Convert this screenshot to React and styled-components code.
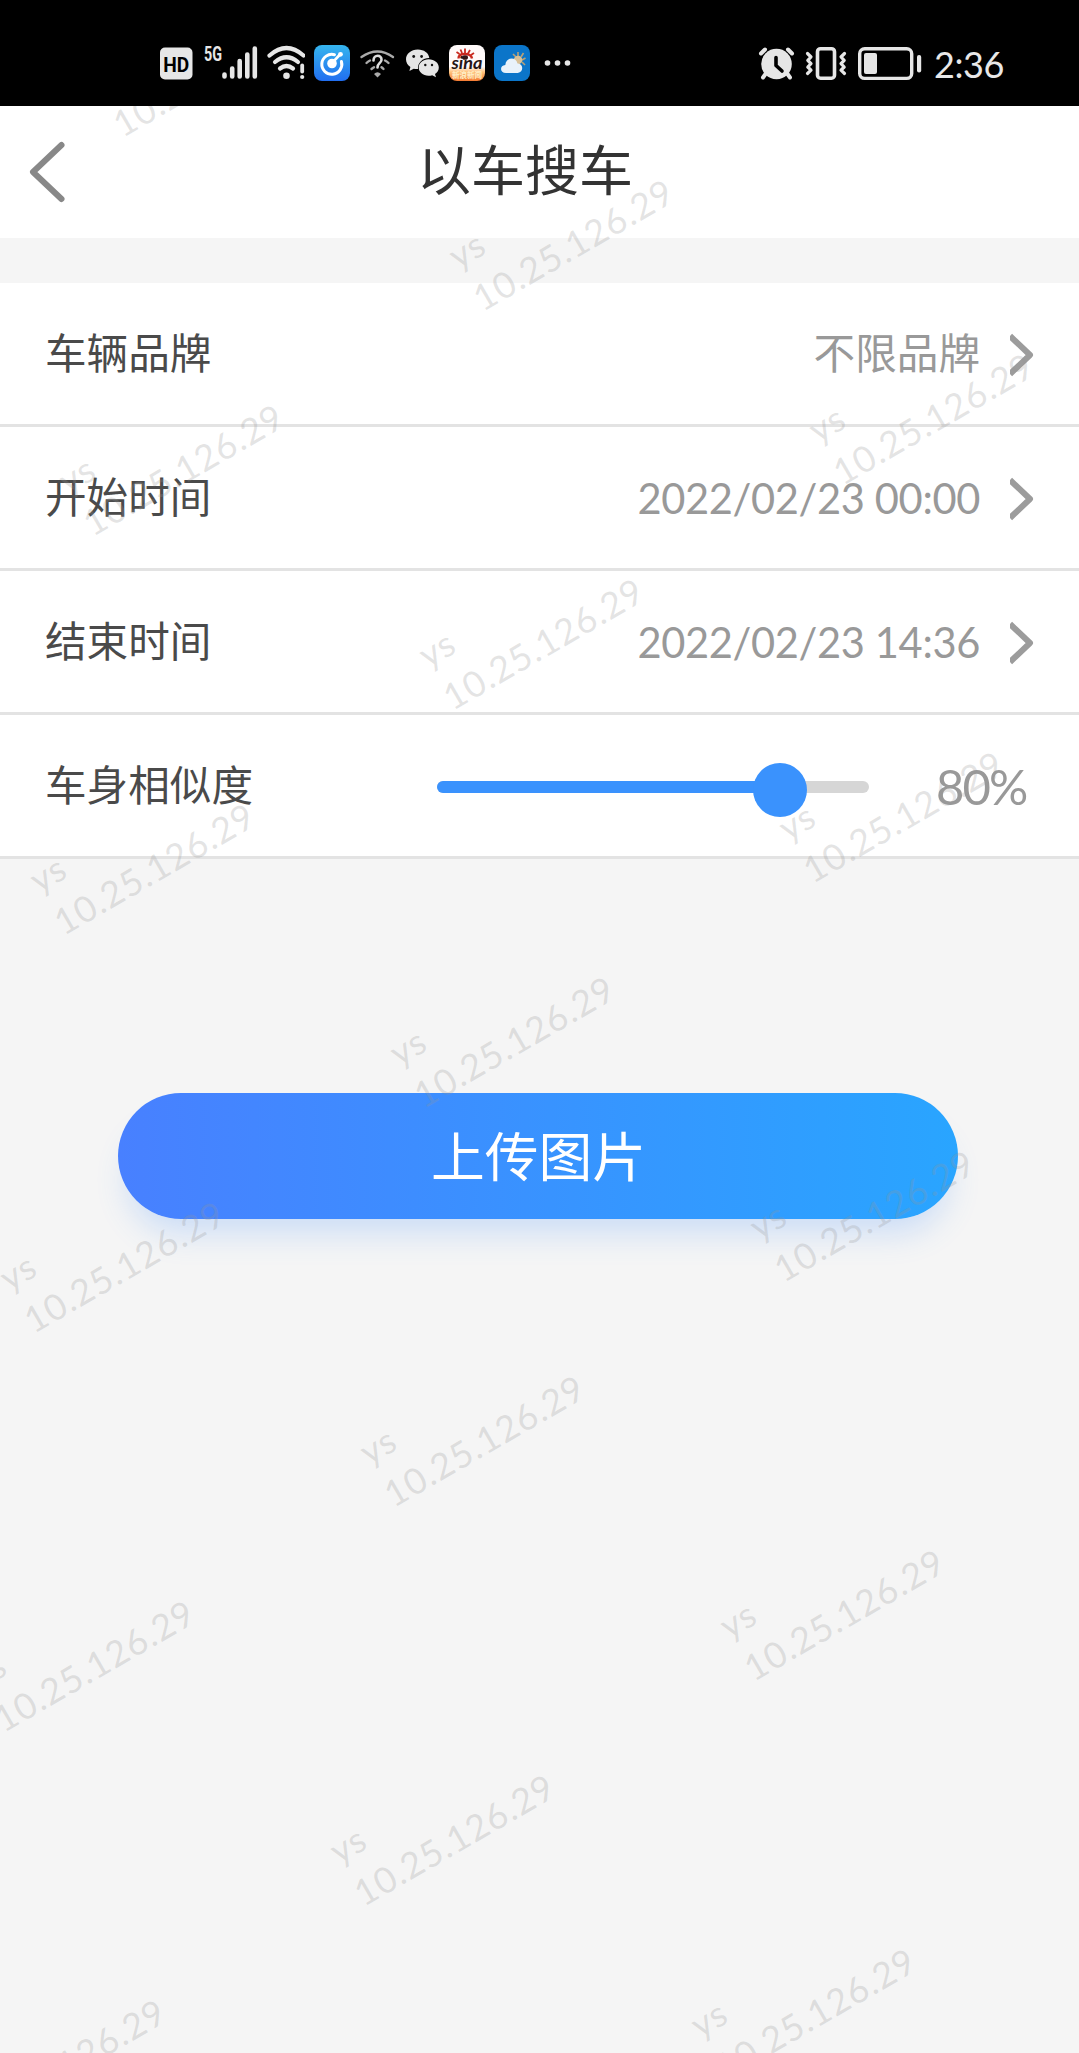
import React from "react";
import styled, { createGlobalStyle } from "styled-components";

const GlobalStyle = createGlobalStyle`
  * { box-sizing: border-box; }
  body {
    margin: 0;
    background: #f5f5f5;
    font-family: Lato, "Noto Sans CJK SC", sans-serif;
  }
`;

const Screen = styled.div`
  width: 1079px;
  height: 2053px;
  overflow: hidden;
  background: #f5f5f5;
  display: flex;
  flex-direction: column;
`;

const StatusBar = styled.div`
  height: 106px;
  flex: none;
  background: #000;
  display: flex;
  justify-content: space-between;
  padding: 40px 75px 0 160px;
`;

const StatusGroup = styled.div`
  display: flex;
  gap: 9px;
  height: 46px;
`;

const StatusIcon = styled.svg`
  display: block;
  flex: none;
`;

const Clock = styled.div`
  color: #e8e8e8;
  font-size: 36px;
  line-height: 49px;
  margin-left: 3px;
  width: 70px;
  letter-spacing: -0.4px;
  white-space: nowrap;
`;

const Content = styled.main`
  position: relative;
  flex: 1;
  overflow: hidden;
`;

const Header = styled.header`
  height: 132px;
  background: #fff;
  display: grid;
  grid-template-columns: 100px 1fr 100px;
  align-items: center;
`;

const BackButton = styled.button`
  border: 0;
  background: none;
  padding: 0 0 0 28px;
  display: flex;
`;

const Title = styled.h1`
  margin: 0;
  padding: 0 29px 2px 0;
  font-size: 54px;
  font-weight: 400;
  line-height: 130px;
  text-align: center;
  color: #333;
`;

const List = styled.section`
  margin-top: 45px;
  background: #fff;
`;

const Row = styled.div`
  height: 144px;
  border-bottom: 3px solid #e3e3e3;
  padding: 0 45px;
  display: flex;
  align-items: center;
`;

const Label = styled.span`
  padding-bottom: 2px;
  font-size: 41.6px;
  line-height: 60px;
  color: #4a4a4a;
`;

const Value = styled.span`
  margin-left: auto;
  padding-bottom: ${(p) => (p.$numeric ? 0 : 2)}px;
  font-size: 41.6px;
  line-height: 60px;
  color: #999;
  letter-spacing: ${(p) => (p.$numeric ? -0.35 : 0)}px;
`;

const Chevron = styled.svg`
  display: block;
  margin: 2px 0 0 30px;
`;

const SliderTrack = styled.div`
  position: relative;
  margin: 2px 0 0 auto;
  width: 432px;
  height: 12px;
  border-radius: 6px;
  background: #d6d6d6;
`;

const SliderFill = styled.div`
  height: 12px;
  border-radius: 6px;
  background: #3a92fd;
`;

const SliderThumb = styled.div`
  position: absolute;
  top: -18px;
  width: 54px;
  height: 54px;
  margin-left: -30px;
  border-radius: 50%;
  background: #3a92fd;
`;

const Percent = styled.span`
  width: 98px;
  margin-left: 67px;
  padding-top: 1px;
  font-size: 49px;
  line-height: 60px;
  letter-spacing: -1.9px;
  color: #999;
  white-space: nowrap;
`;

const UploadButton = styled.button`
  display: block;
  width: 840px;
  height: 126px;
  margin: 234px 0 0 117.5px;
  padding: 0 0 0 2px;
  border: 0;
  border-radius: 63px;
  background: linear-gradient(90deg, #4880ff, #29a5ff);
  box-shadow: 0 24px 32px -10px rgba(70, 145, 255, 0.24);
  color: #fff;
  font: 400 53.8px/122px Lato, "Noto Sans CJK SC", sans-serif;
`;

const WatermarkLayer = styled.div`
  position: absolute;
  inset: 0;
  pointer-events: none;
`;

const Mark = styled.div`
  position: absolute;
  width: 240px;
  font-size: 36px;
  line-height: 49px;
  letter-spacing: 0.95px;
  color: rgba(150, 150, 150, 0.26);
  transform-origin: 0 0;
  transform: rotate(-30deg);
  white-space: nowrap;
`;

const INK = "#e6e6e6";

function Icon({ x, w, children }) {
  return (
    <StatusIcon width={w} height="46" viewBox={`${x} 40 ${w} 46`} fill="none">
      {children}
    </StatusIcon>
  );
}

function LeftIcons() {
  return (
    <StatusGroup>
      <Icon x={160} w={34}>
        <rect x="160" y="47.5" width="32.5" height="32" rx="5" fill={INK} />
        <text x="176.2" y="71.5" fontSize="21" fontWeight="700" fontFamily="Roboto, sans-serif" textAnchor="middle" textLength="26" lengthAdjust="spacingAndGlyphs" fill="#000">HD</text>
      </Icon>
      <Icon x={203} w={55}>
        <text x="204" y="61" fontSize="20" fontWeight="700" fontFamily="Roboto, sans-serif" textLength="18" lengthAdjust="spacingAndGlyphs" fill={INK}>5G</text>
        <g stroke={INK} strokeWidth="4.6" strokeLinecap="round">
          <path d="M224.5 74.5V76.5M232.2 68.5V76.5M239.7 61V76.5M247.3 54.5V76.5M254.8 48.5V76.5" />
        </g>
      </Icon>
      <Icon x={267} w={38}>
        <g stroke={INK} strokeWidth="4.2" strokeLinecap="round">
          <path d="M269.5 55.5Q286.5 40.5 303.5 55.5" />
          <path d="M275 62Q286.5 52.5 298 62" />
          <path d="M280 68.5Q286.5 63.5 293 68.5" />
          <path d="M302.2 65.5V71.5" strokeWidth="3.8" />
        </g>
        <circle cx="286.5" cy="75.8" r="3.3" fill={INK} />
        <circle cx="302.2" cy="77" r="2.1" fill={INK} />
      </Icon>
      <Icon x={314} w={36}>
        <defs>
          <linearGradient id="appBlue" x1="0" y1="0" x2="0" y2="1">
            <stop offset="0" stopColor="#35b5ee" />
            <stop offset="1" stopColor="#216ef0" />
          </linearGradient>
        </defs>
        <rect x="314" y="45" width="36" height="36" rx="8" fill="url(#appBlue)" />
        <path d="M334.5 54.7A10 10 0 1 0 341.4 61.5" stroke="#fff" strokeWidth="3" strokeLinecap="round" />
        <circle cx="332" cy="63.5" r="4.8" fill="#fff" />
        <path d="M333 62L340 54.5" stroke="#fff" strokeWidth="2.6" />
        <circle cx="340.5" cy="54.3" r="2.4" fill="#fff" />
      </Icon>
      <Icon x={359} w={37}>
        <g stroke="#aaa" strokeWidth="2.4" strokeLinecap="round">
          <path d="M361.5 57Q377.5 46 393 57" />
          <path d="M366.5 63Q368 61.5 370 60.5M371.5 69Q373 67.8 374 67.2M388.5 63Q387 61.5 385 60.5M383.5 69Q382.5 68 381.5 67.3" />
        </g>
        <path d="M373.5 60.5C373.5 54 382 54.5 381.5 60C381.2 63 377.5 63 377.5 67.5" stroke="#ddd" strokeWidth="2.6" strokeLinecap="round" />
        <path d="M374 74Q377.5 70.5 381 74L377.5 77.5Z" fill="#aaa" />
      </Icon>
      <Icon x={405} w={35}>
        <path d="M417.8 49.5C411 49.5 406 54 406 59.3C406 62.5 407.7 65.2 410.4 67L409.4 71L413.7 68.7Q415.8 69.2 418 69.1A10.8 10 0 0 1 429.3 58C428.8 53 424 49.5 417.8 49.5Z" fill={INK} />
        <path d="M428.7 59.3C423 59.3 418.7 63 418.7 67.6C418.7 72.2 423 75.8 428.5 75.8Q430.5 75.8 432.2 75.2L436 77.2L435 73.9C437.4 72.3 438.8 70 438.8 67.4C438.8 63 434.4 59.3 428.7 59.3Z" fill={INK} />
        <g fill="#111">
          <circle cx="413.7" cy="56.5" r="1.4" /><circle cx="421.6" cy="56.5" r="1.4" />
          <circle cx="425.3" cy="65" r="1.2" /><circle cx="432" cy="65" r="1.2" />
        </g>
      </Icon>
      <Icon x={449} w={36}>
        <defs>
          <linearGradient id="sinaGround" x1="0" y1="0" x2="0" y2="1">
            <stop offset="0.6" stopColor="#fffafa" />
            <stop offset="0.75" stopColor="#ffc27c" />
            <stop offset="1" stopColor="#f47a32" />
          </linearGradient>
        </defs>
        <rect x="449" y="45" width="36" height="36" rx="8" fill="url(#sinaGround)" />
        <path d="M458.5 58.5Q458.5 54 464.5 54Q471.5 54 472 58.5" stroke="#c8281e" strokeWidth="2.4" />
        <path d="M459.5 54L456.5 52M462 53L460.5 49.5M465 53V48.5M468 53.5L470 50M471 55L474 53" stroke="#c8281e" strokeWidth="1.8" />
        <ellipse cx="465" cy="57.5" rx="3" ry="2.3" fill="#321414" />
        <text x="451.5" y="68.5" fontSize="17" fontWeight="700" fontStyle="italic" fontFamily="Lato, sans-serif" textLength="31" lengthAdjust="spacingAndGlyphs" fill="#261616">sina</text>
        <text x="467" y="78" fontSize="7.5" fontWeight="700" fontFamily="Noto Sans CJK SC, sans-serif" textAnchor="middle" fill="#fff0c8">新浪新闻</text>
      </Icon>
      <Icon x={494} w={36}>
        <rect x="494" y="45" width="36" height="36" rx="8" fill="#0b75c9" />
        <g stroke="#b9a176" strokeWidth="1.6">
          <path d="M518 52V56M513 54L516 57M523.5 53L521 57M525.5 58L522 60M525 65L522 62" />
        </g>
        <circle cx="518" cy="60" r="4.3" fill="#d8c097" />
        <path d="M506 73C499.5 73 499.5 65.3 505.3 65C506 57 516 56.5 517.5 63.5C523.5 63 524 72.5 517.8 73Z" fill="#e9f2fa" />
      </Icon>
      <Icon x={539} w={36}>
        <g fill={INK}>
          <circle cx="547.5" cy="63" r="2.8" /><circle cx="557.5" cy="63" r="2.8" /><circle cx="567.5" cy="63" r="2.8" />
        </g>
      </Icon>
    </StatusGroup>
  );
}

function RightIcons() {
  return (
    <StatusGroup>
      <Icon x={757} w={39}>
        <circle cx="776.5" cy="64" r="15.3" fill={INK} />
        <g stroke={INK} strokeWidth="4" strokeLinecap="round">
          <path d="M761 53.5L765 49.5M792 53.5L788 49.5M765.5 74L763 77.5M787.5 74L790 77.5" />
        </g>
        <path d="M776 57.5V65.5L782 71" stroke="#000" strokeWidth="3.6" strokeLinecap="round" strokeLinejoin="round" />
      </Icon>
      <Icon x={805} w={43}>
        <rect x="817.5" y="48.7" width="17" height="29.5" rx="3" stroke={INK} strokeWidth="3.6" />
        <g stroke={INK} strokeWidth="3.2" strokeLinecap="round" strokeLinejoin="round">
          <path d="M807.5 53.5L811 57L807.8 60.3L811 63.7L807.8 67L811 70.2L807.5 73.5" />
          <path d="M844.5 53.5L841 57L844.2 60.3L841 63.7L844.2 67L841 70.2L844.5 73.5" />
        </g>
      </Icon>
      <Icon x={857} w={65}>
        <rect x="859.7" y="48.7" width="52" height="29.7" rx="5" stroke={INK} strokeWidth="3.4" />
        <rect x="864" y="53" width="13" height="21" rx="2" fill={INK} />
        <rect x="917" y="55" width="4.2" height="17.5" rx="2" fill={INK} />
      </Icon>
      <Clock>2:36</Clock>
    </StatusGroup>
  );
}

function RowArrow() {
  return (
    <Chevron width="24" height="46" viewBox="0 0 24 46" fill="none">
      <path d="M0 4L20 23L0 42" stroke="#9c9c9c" strokeWidth="6" strokeLinejoin="round" />
    </Chevron>
  );
}

// Staggered grid of marks, tilted together with their text.
const marks = [];
for (let r = -1; r < 8; r++) {
  for (let c = -6; c < 6; c++) {
    const along = c * 450 + (r % 2 ? 225 : 0);
    const x = 438.8 + along * 0.866 + r * 330.5 * 0.5;
    const y = 131 + along * -0.5 + r * 330.5 * 0.866;
    if (x > -220 && x < 1060 && y > -75 && y < 2030) marks.push({ x, y });
  }
}

const SIMILARITY = 80;

export default function App() {
  return (
    <>
      <GlobalStyle />
      <Screen>
        <StatusBar>
          <LeftIcons />
          <RightIcons />
        </StatusBar>
        <Content>
          <Header>
            <BackButton aria-label="返回">
              <svg width="40" height="64" viewBox="28 140 40 64" fill="none">
                <path d="M61.5 145L33 172L61.5 199" stroke="#888" strokeWidth="6" strokeLinecap="round" strokeLinejoin="round" />
              </svg>
            </BackButton>
            <Title>以车搜车</Title>
          </Header>
          <List>
            <Row><Label>车辆品牌</Label><Value>不限品牌</Value><RowArrow /></Row>
            <Row><Label>开始时间</Label><Value $numeric>2022/02/23 00:00</Value><RowArrow /></Row>
            <Row><Label>结束时间</Label><Value $numeric>2022/02/23 14:36</Value><RowArrow /></Row>
            <Row>
              <Label>车身相似度</Label>
              <SliderTrack>
                <SliderFill style={{ width: `${SIMILARITY}%` }} />
                <SliderThumb style={{ left: `${SIMILARITY}%` }} />
              </SliderTrack>
              <Percent>{SIMILARITY}%</Percent>
            </Row>
          </List>
          <UploadButton>上传图片</UploadButton>
          <WatermarkLayer>
            {marks.map((m) => (
              <Mark key={`${m.x}:${m.y}`} style={{ left: m.x, top: m.y }}>
                ys<br />10.25.126.29
              </Mark>
            ))}
          </WatermarkLayer>
        </Content>
      </Screen>
    </>
  );
}
